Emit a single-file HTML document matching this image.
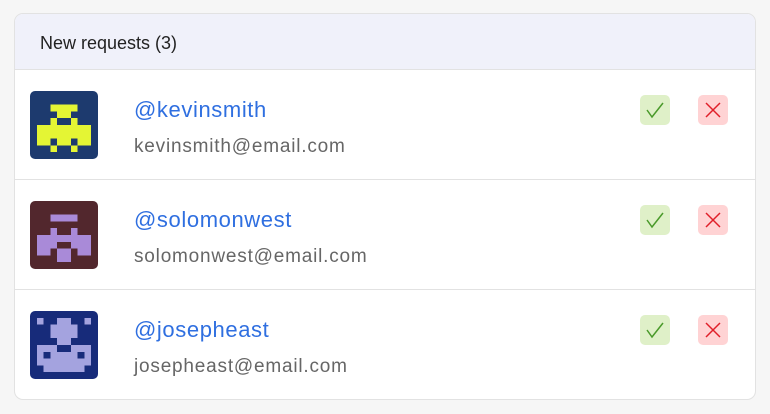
<!DOCTYPE html><html><head><style>
body{margin:0;background:#f6f6f6;font-family:"Liberation Sans",sans-serif;width:770px;height:414px;overflow:hidden}
.card{position:absolute;left:14px;top:13px;width:740px;height:385px;background:#fff;border:1px solid #e2e2e2;border-radius:9px;overflow:hidden}
.hd{height:55px;background:#f0f1fa;border-bottom:1px solid #e2e2e2;font-size:18px;color:#222;line-height:58px;padding-left:25px}
.row{position:relative;height:109px;border-bottom:1px solid #e2e2e2}
.row:last-child{border-bottom:none}
.av{position:absolute;left:15px;top:21px;width:68px;height:68px;border-radius:5px;overflow:hidden}
.av svg{display:block;shape-rendering:crispEdges}
.nm{position:absolute;left:119px;top:27px;font-size:22px;color:#2f6fe0;letter-spacing:0.6px}
.em{position:absolute;left:119px;top:66px;font-size:19px;color:#666;letter-spacing:0.8px}
.b{position:absolute;top:25px;width:30px;height:30px;border-radius:5px}
.ok{left:625px;background:#dff0c8}.no{left:683px;background:#ffd3d4}
.b svg{position:absolute;left:5px;top:5px}
</style></head><body><div class="card">
<div class="hd">New requests (3)</div>
<div class="row"><div class="av"><svg width="68" height="68" viewBox="0 0 10 10"><rect width="10" height="10" fill="#1d3a6e"/><g fill="#e4f534"><rect x="3" y="2" width="4" height="1"/><rect x="4" y="3" width="2" height="1"/><rect x="3" y="4" width="1" height="1"/><rect x="6" y="4" width="1" height="1"/><rect x="1" y="5" width="8" height="2"/><rect x="1" y="7" width="2" height="1"/><rect x="4" y="7" width="2" height="1"/><rect x="7" y="7" width="2" height="1"/><rect x="3" y="8" width="1" height="1"/><rect x="6" y="8" width="1" height="1"/></g></svg></div>
<div class="nm">@kevinsmith</div><div class="em">kevinsmith@email.com</div>
<div class="b ok"><svg width="20" height="20"><path d="M2 10l5 7 11-14" stroke="#4a9a2a" stroke-width="1.5" fill="none"/></svg></div>
<div class="b no"><svg width="20" height="20"><path d="M3 3l14 14M17 3L3 17" stroke="#e0202a" stroke-width="1.5"/></svg></div></div>
<div class="row"><div class="av"><svg width="68" height="68" viewBox="0 0 10 10"><rect width="10" height="10" fill="#52272d"/><g fill="#a98ad8"><rect x="3" y="2" width="4" height="1"/><rect x="3" y="4" width="1" height="1"/><rect x="6" y="4" width="1" height="1"/><rect x="1" y="5" width="8" height="1"/><rect x="1" y="6" width="3" height="1"/><rect x="6" y="6" width="3" height="1"/><rect x="1" y="7" width="2" height="1"/><rect x="4" y="7" width="2" height="2"/><rect x="7" y="7" width="2" height="1"/></g></svg></div>
<div class="nm">@solomonwest</div><div class="em">solomonwest@email.com</div>
<div class="b ok"><svg width="20" height="20"><path d="M2 10l5 7 11-14" stroke="#4a9a2a" stroke-width="1.5" fill="none"/></svg></div>
<div class="b no"><svg width="20" height="20"><path d="M3 3l14 14M17 3L3 17" stroke="#e0202a" stroke-width="1.5"/></svg></div></div>
<div class="row"><div class="av"><svg width="68" height="68" viewBox="0 0 10 10"><rect width="10" height="10" fill="#172b7a"/><g fill="#a4a3df"><rect x="1" y="1" width="1" height="1"/><rect x="4" y="1" width="2" height="1"/><rect x="8" y="1" width="1" height="1"/><rect x="3" y="2" width="4" height="2"/><rect x="4" y="4" width="2" height="1"/><rect x="1" y="5" width="3" height="1"/><rect x="6" y="5" width="3" height="1"/><rect x="1" y="6" width="1" height="1"/><rect x="3" y="6" width="4" height="1"/><rect x="8" y="6" width="1" height="1"/><rect x="1" y="7" width="8" height="1"/><rect x="2" y="8" width="6" height="1"/></g></svg></div>
<div class="nm">@josepheast</div><div class="em">josepheast@email.com</div>
<div class="b ok"><svg width="20" height="20"><path d="M2 10l5 7 11-14" stroke="#4a9a2a" stroke-width="1.5" fill="none"/></svg></div>
<div class="b no"><svg width="20" height="20"><path d="M3 3l14 14M17 3L3 17" stroke="#e0202a" stroke-width="1.5"/></svg></div></div>
</div></body></html>
